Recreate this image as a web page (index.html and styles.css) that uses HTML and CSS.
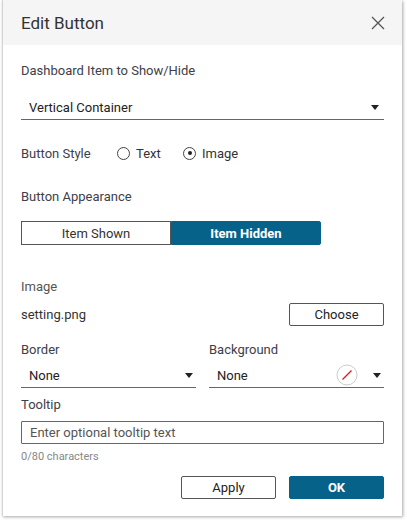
FILE: index.html
```html
<!DOCTYPE html>
<html>
<head>
<meta charset="utf-8">
<link rel="stylesheet" href="styles.css">
</head>
<body>
<div class="dialog">
  <div class="header">
    <span class="title">Edit Button</span>
    <svg class="close" width="14" height="14" viewBox="0 0 14 14"><path d="M1 1L13 13M13 1L1 13" stroke="#555" stroke-width="1.3" fill="none"/></svg>
  </div>
  <div class="body">
    <div class="label l1">Dashboard Item to Show/Hide</div>
    <div class="select full"><span>Vertical Container</span><span class="caret"></span></div>
    <div class="row style">
      <span class="label">Button Style</span>
      <span class="radio"><span class="circle"></span>Text</span>
      <span class="radio"><span class="circle on"></span>Image</span>
    </div>
    <div class="label l3">Button Appearance</div>
    <div class="seg">
      <div class="segbtn">Item Shown</div>
      <div class="segbtn active">Item Hidden</div>
    </div>
    <div class="label l4">Image</div>
    <div class="row file">
      <span class="text">setting.png</span>
      <button class="btn">Choose</button>
    </div>
    <div class="cols">
      <div class="col">
        <div class="label">Border</div>
        <div class="select"><span>None</span><span class="caret"></span></div>
      </div>
      <div class="col">
        <div class="label">Background</div>
        <div class="select"><span>None</span><span class="sw"><svg width="22" height="22" viewBox="0 0 22 22"><circle cx="11" cy="11" r="10" fill="#fff" stroke="#ccc" stroke-width="1"/><path d="M6.5 15.5L15.5 6.5" stroke="#e0141e" stroke-width="1.2"/></svg><span class="caret"></span></span></div>
      </div>
    </div>
    <div class="label l5">Tooltip</div>
    <div class="input">Enter optional tooltip text</div>
    <div class="count">0/80 characters</div>
    <div class="actions">
      <button class="btn">Apply</button>
      <button class="btn primary">OK</button>
    </div>
  </div>
</div>
</body>
</html>
```
FILE: styles.css
```css
html, body { margin: 0; padding: 0; }
body {
  width: 407px; height: 520px; background: #fff; overflow: hidden;
  font-family: Roboto, "Liberation Sans", sans-serif; color: #333;
}
.dialog {
  margin-left: 2px; width: 400px; height: 516px; background: #fff;
  border-left: 1px solid #d4d4d4;
  box-shadow: 1px 1px 3px rgba(0,0,0,0.35);
  box-sizing: border-box;
}
.header {
  height: 45px; background: #f5f5f5; display: flex; align-items: center;
  justify-content: space-between; padding: 0 17px 0 18px;
}
.title { font-size: 17px; color: #333; }
.close { display: block; margin-top: 1px; }
.body { padding: 0 18px 0 18px; font-size: 13px; }
.label { color: #40404a; font-size: 13px; }
.l1 { margin-top: 18px; line-height: 16px; }
.select {
  display: flex; align-items: center; justify-content: space-between;
  border-bottom: 1px solid #666; height: 24px; padding: 0 5px 0 8px; color: #222;
}
.select.full { margin-top: 16px; }
.caret {
  width: 0; height: 0; border-left: 4px solid transparent; border-right: 4px solid transparent;
  border-top: 5px solid #222; display: inline-block;
}
.sw { display: flex; align-items: center; gap: 15px; }
.sw svg { display: block; }
.row { display: flex; align-items: center; }
.style { margin-top: 25px; height: 16px; }
.radio { display: flex; align-items: center; gap: 6px; color: #333; }
.style .label { width: 96px; }
.style .radio:nth-of-type(2) { width: 66px; }
.circle {
  width: 13px; height: 13px; border: 1px solid #444; border-radius: 50%; box-sizing: border-box;
  position: relative; display: inline-block;
}
.circle.on::after {
  content: ""; position: absolute; left: 3.5px; top: 3.5px; width: 4px; height: 4px; border-radius: 50%; background: #222;
}
.l3 { margin-top: 28px; line-height: 16px; }
.seg { display: flex; margin-top: 16px; width: 300px; height: 24px; }
.segbtn {
  flex: 1; display: flex; align-items: center; justify-content: center;
  border: 1px solid #555; box-sizing: border-box; color: #333;
}
.segbtn.active { background: #07628a; border-color: #07628a; color: #fff; font-weight: bold; border-radius: 0 2px 2px 0; }
.l4 { margin-top: 34px; line-height: 16px; color: #555; }
.file { justify-content: space-between; margin-top: 8px; height: 23px; }
.btn {
  font-family: inherit; font-size: 13px; color: #222; background: #fff; border: 1px solid #555;
  border-radius: 2px; width: 95px; height: 23px; padding: 0;
}
.btn.primary { background: #07628a; border-color: #07628a; color: #fff; font-weight: bold; }
.cols { display: flex; gap: 13px; margin-top: 16px; }
.col { flex: 1; display: flex; flex-direction: column; gap: 5px; }
.col .select { padding-right: 3px; }
.col .label { line-height: 16px; }
.l5 { margin-top: 9px; line-height: 16px; }
.input {
  margin-top: 8px; height: 23px; border: 1px solid #666; border-radius: 1px; box-sizing: border-box;
  display: flex; align-items: center; padding-left: 8px; color: #555;
}
.count { font-size: 11px; color: #888; margin-top: 6px; line-height: 13px; }
.actions { display: flex; justify-content: flex-end; gap: 13px; margin-top: 13px; }
```
